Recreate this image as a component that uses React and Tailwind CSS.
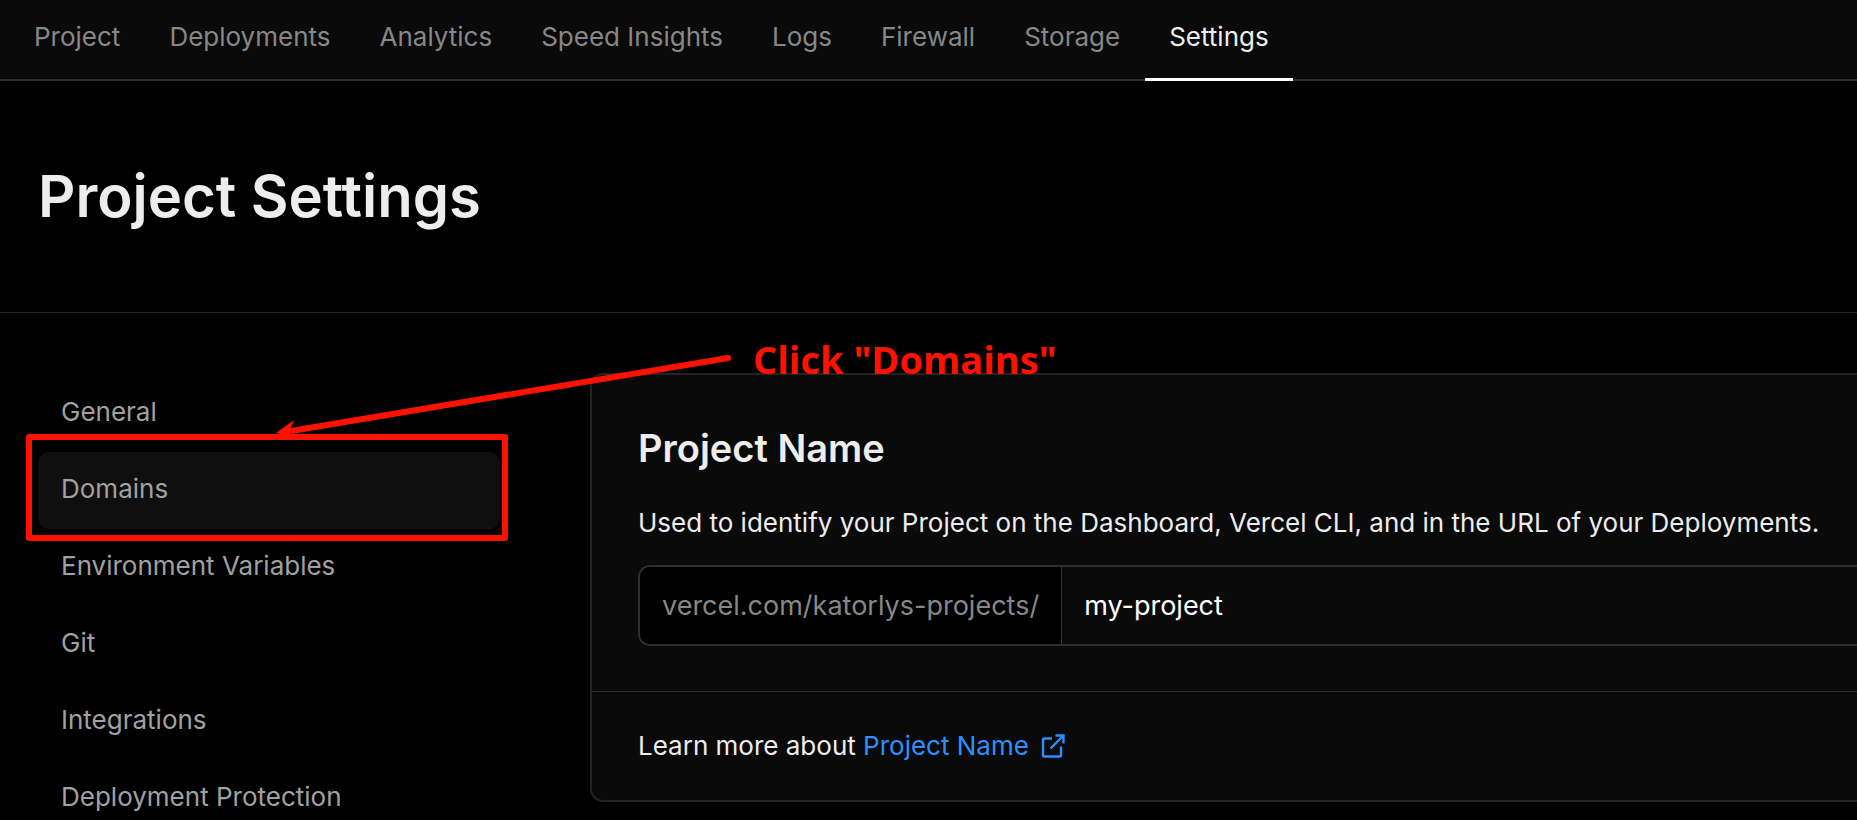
const tabs = ["Project", "Deployments", "Analytics", "Speed Insights", "Logs", "Firewall", "Storage", "Settings"];
const sections = ["General", "Domains", "Environment Variables", "Git", "Integrations", "Deployment Protection"];

function Tabs({ active }) {
  return (
    <nav aria-label="Project" className="flex h-[81px] gap-px border-b-2 border-[#2e2e2e] bg-[#0a0a0a] pl-[10px] text-[26px] leading-9">
      {tabs.map((tab) => (
        <a
          key={tab}
          href="#"
          aria-current={tab === active ? "page" : undefined}
          className={
            tab === active
              ? "-mb-0.5 whitespace-nowrap border-b-[3px] border-white px-6 pt-[19px] text-[#ededed]"
              : "-mb-0.5 whitespace-nowrap px-6 pt-[19px] text-[#878787]"
          }
        >
          {tab}
        </a>
      ))}
    </nav>
  );
}

function ExternalIcon() {
  return (
    <svg aria-hidden="true" viewBox="0 0 24 24" className="size-6" fill="none" stroke="currentColor" strokeWidth="2.400">
      <path d="M11 4.500H3.500A1.500 1.500 0 0 0 2 6v15a1.500 1.500 0 0 0 1.500 1.500h15A1.500 1.500 0 0 0 20 21v-8.500M14.500 1.500h8v8M22 2 9.500 14.500" />
    </svg>
  );
}

function Sidebar({ hovered }) {
  return (
    <aside className="w-[462px] shrink-0 pt-0.5">
      <ul className="flex flex-col text-[26px] leading-9 text-[#a1a1a1]">
        {sections.map((name) => (
          <li key={name} className="relative">
            <a href="#" className={name === hovered ? "flex h-[77px] items-center rounded-[11px] bg-[#0f0f0f] px-[23px] pb-[3px]" : "flex h-[77px] items-center rounded-[11px] px-[23px] pb-[3px]"}>
              {name}
            </a>
            {name === hovered && (
              <div className="pointer-events-none absolute -top-[18px] -right-2 -bottom-3 -left-3 rounded-[3px] border-6 border-[#ff1100]">
                <svg aria-hidden="true" viewBox="0 0 460 84" width="460" height="84" className="absolute -top-[86px] left-[244px]" fill="#ff1100">
                  <path d="M452 4 15 77" stroke="#ff1100" strokeWidth="6" />
                  <circle cx="452" cy="4" r="3" />
                  <path d="M0 79 18 66 15 74V80L20 84Z" />
                </svg>
                <p className="absolute -top-[107px] left-[721px] whitespace-nowrap font-['Open_Sans',sans-serif] text-[38px] leading-[52px] font-bold text-[#ff1100]">
                  Click "Domains"
                </p>
              </div>
            )}
          </li>
        ))}
      </ul>
    </aside>
  );
}

function ProjectNameCard() {
  return (
    <section className="min-w-0 grow rounded-l-[13px] border-2 border-r-0 border-[#232323] bg-[#0a0a0a] text-[26px] leading-9 text-[#ededed]">
      <div className="pt-11 pb-[45px] pl-[46px]">
        <h2 className="text-[38px] leading-[58px] font-semibold">Project Name</h2>
        <p className="mt-7 whitespace-nowrap">
          <label htmlFor="project-name">Used to identify your Project on the Dashboard, Vercel CLI, and in the URL of your Deployments.</label>
        </p>
        <div className="mt-6 flex h-[81px] overflow-hidden rounded-l-[12px] border-2 border-r-0 border-[#2e2e2e] text-[27px]">
          <span className="flex items-center border-r border-[#2e2e2e] bg-black px-[22px] text-[#878787]">vercel.com/katorlys-projects/</span>
          <input id="project-name" type="text" defaultValue="my-project" className="min-w-0 grow bg-transparent px-[22px] text-white outline-none" />
        </div>
      </div>
      <footer className="flex h-[109px] items-center border-t border-[#2e2e2e] pl-[46px]">
        <p>
          Learn more about{" "}
          <a href="#" className="inline-flex items-center gap-3 text-[#2f8fff]">
            Project Name
            <ExternalIcon />
          </a>
        </p>
      </footer>
    </section>
  );
}

export default function App() {
  return (
    <div className="min-h-screen overflow-hidden bg-black font-['Inter',sans-serif]">
      <Tabs active="Settings" />
      <header className="flex h-[232px] items-center border-b border-[#232323] px-[38px] pb-0.5">
        <h1 className="text-[58px] leading-[72px] font-semibold text-[#ededed]">Project Settings</h1>
      </header>
      <main className="flex items-start gap-[90px] pt-[60px] pl-[38px]">
        <Sidebar hovered="Domains" />
        <ProjectNameCard />
      </main>
    </div>
  );
}
